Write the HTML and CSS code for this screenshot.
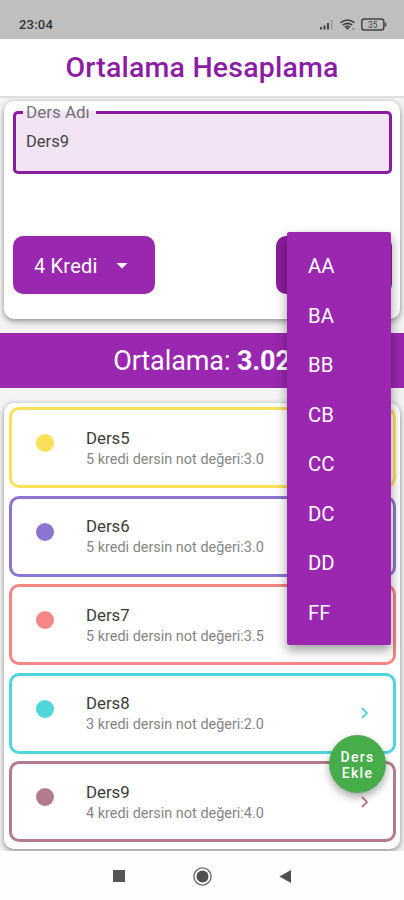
FILE: index.html
```html
<!DOCTYPE html>
<html lang="tr">
<head>
<meta charset="utf-8">
<title>Ortalama Hesaplama</title>
<link rel="stylesheet" href="styles.css">
</head>
<body>
<div class="phone">
  <div class="status">
    <span class="clock">23:04</span>
    <svg class="status-icons" width="70" height="16" viewBox="0 0 70 16">
      <g fill="#444"><rect x="2" y="11" width="2" height="2.500"/><rect x="5.500" y="9.500" width="2" height="4"/><rect x="9" y="7" width="2" height="6.500"/></g>
      <rect x="12.800" y="4" width="1.600" height="9.500" fill="#999"/>
      <g fill="none" stroke="#444" stroke-width="1.600"><path d="M22.500 6.700Q29.500 1.300 36.500 6.700"/><path d="M24.700 9.200Q29.500 5.500 34.300 9.200"/><path d="M26.800 11.300Q29.500 9.400 32.200 11.300"/></g>
      <path d="M27.500 11.700h4L29.500 14z" fill="#444"/><path d="M34 13h3" stroke="#777"/>
      <rect x="43.800" y="3" width="22" height="11" rx="2.500" fill="none" stroke="#444" stroke-width="1.500"/>
      <path d="M67.500 6.500v4" stroke="#444" stroke-width="1.500"/>
      <text x="54.800" y="11.700" text-anchor="middle" class="battery">35</text>
    </svg>
  </div>
  <header class="appbar">Ortalama Hesaplama</header>
  <main class="body">
    <section class="card form">
      <fieldset class="field"><legend>Ders Adı</legend><span>Ders9</span></fieldset>
      <div class="selects">
        <div class="select credit"><span>4 Kredi</span><svg width="12" height="6" viewBox="0 0 12 6"><path d="M.5 0h11L6 5.500z" fill="#fff"/></svg></div>
        <div class="select grade"></div>
      </div>
    </section>
    <div class="banner"><span>Ortalama: <b>3.02</b></span></div>
    <section class="card list">
      <article class="item yellow"><i class="dot"></i><div class="info"><h2>Ders5</h2><p>5 kredi dersin not değeri:3.0</p></div></article>
      <article class="item violet"><i class="dot"></i><div class="info"><h2>Ders6</h2><p>5 kredi dersin not değeri:3.0</p></div></article>
      <article class="item red"><i class="dot"></i><div class="info"><h2>Ders7</h2><p>5 kredi dersin not değeri:3.5</p></div></article>
      <article class="item cyan"><i class="dot"></i><div class="info"><h2>Ders8</h2><p>3 kredi dersin not değeri:2.0</p></div><svg class="chev" width="8" height="12" viewBox="0 0 8 12"><path d="M1 1l5 5-5 5"/></svg></article>
      <article class="item mauve"><i class="dot"></i><div class="info"><h2>Ders9</h2><p>4 kredi dersin not değeri:4.0</p></div><svg class="chev" width="8" height="12" viewBox="0 0 8 12"><path d="M1 1l5 5-5 5"/></svg></article>
    </section>
  </main>
  <nav class="nav">
    <svg width="404" height="49" viewBox="0 0 404 49">
      <rect x="113" y="19" width="12" height="12" fill="#555"/>
      <circle cx="202.500" cy="25.500" r="8.600" fill="none" stroke="#666" stroke-width="1.400"/><circle cx="202.500" cy="25.500" r="6" fill="#505050"/>
      <path d="M279.500 25.500L291 19v13z" fill="#505050"/>
    </svg>
  </nav>
  <div class="menu"><span>AA</span><span>BA</span><span>BB</span><span>CB</span><span>CC</span><span>DC</span><span>DD</span><span>FF</span></div>
  <div class="fab">Ders<br>Ekle</div>
</div>
</body>
</html>
```
FILE: styles.css
```css
* { box-sizing: border-box; }
body { margin: 0; font-family: Roboto, "Liberation Sans", sans-serif; }
.phone { position: relative; width: 404px; height: 900px; overflow: hidden; display: flex; flex-direction: column; background: #fdfdfd; }
.status { height: 39px; flex: none; background: #bfbfbf; display: flex; justify-content: space-between; align-items: flex-start; padding: 16px 16px 0 19px; }
.clock { font-size: 13px; line-height: 18px; font-weight: 500; color: #333; letter-spacing: .2px; }
.status-icons { display: block; }
.battery { font-size: 8.5px; fill: #444; }
.appbar { height: 57px; flex: none; background: #fff; display: flex; justify-content: center; align-items: center; font-size: 28.5px; font-weight: 500; color: #8c1ba5; letter-spacing: .2px; }
.body { height: 755px; flex: none; overflow: hidden; background: #f5f4f4; border-top: 2px solid #dfdfdf; padding: 3px 4px 0; }
.card { background: #fff; border-radius: 10px; box-shadow: 0 3px 6px rgba(0,0,0,.32), 0 0 5px rgba(0,0,0,.14); }
.form { height: 218px; padding: 2px 8px 0 9px; display: flex; flex-direction: column; }
.field { height: 71px; flex: none; margin: 0; min-width: 0; border: 3px solid #8a1aa0; border-radius: 5px; background: #f2e4f5; padding: 0 10px; color: #444; font-size: 16.5px; line-height: 20px; }
.field legend { font-size: 17px; line-height: 18px; padding: 0 6px 0 3px; margin-left: -3px; color: #737077; }
.field span { display: block; margin-top: 11px; }
.selects { display: flex; justify-content: space-between; margin-top: 62px; }
.select { height: 58px; border-radius: 10px; background: #9927b0; color: #fff; display: flex; align-items: center; font-size: 20px; }
.credit { width: 142px; padding: 2px 0 0 21px; gap: 18px; letter-spacing: .2px; }
.grade { width: 116px; background: #8c1ca0; }
.banner { height: 55px; margin: 14px -4px 15px; background: #9a27b0; color: #fff; display: flex; align-items: center; justify-content: center; font-size: 27px; letter-spacing: -.1px; padding-top: 1px; }
.list { height: 446px; padding: 4px 4px 0 5px; display: flex; flex-direction: column; gap: 7.6px; }
.item { height: 81px; flex: none; border: 3px solid currentColor; border-radius: 10px; display: flex; align-items: center; padding: 0 24px; }
.dot { width: 18px; height: 18px; border-radius: 50%; background: currentColor; margin: -9px 32px 0 0; }
.info { flex: 1; padding-top: 2px; }
.info h2 { margin: 0; font-size: 16.8px; line-height: 21px; font-weight: 400; color: #3b3b3b; }
.info p { margin: 0; font-size: 14.45px; line-height: 21px; color: #858585; white-space: nowrap; }
.chev { fill: none; stroke: currentColor; stroke-width: 1.8; }
.yellow { color: #f8e159; }
.violet { color: #8c75d2; }
.red { color: #f48683; }
.cyan { color: #4fd6dc; }
.mauve { color: #b37b8c; }
.nav { flex: 1; }
.nav svg { display: block; }
.menu { position: absolute; left: 287px; top: 232px; width: 104px; height: 413px; padding: 9px 0 0 21px; background: #9b27b1; border-radius: 2px; box-shadow: 0 5px 12px rgba(0,0,0,.4); display: flex; flex-direction: column; color: #fff; font-size: 20.3px; }
.menu span { height: 49.5px; line-height: 50px; flex: none; }
.fab { position: absolute; left: 329px; top: 735px; width: 57px; height: 58px; border-radius: 50%; background: #47ad4b; color: #fff; font-size: 14px; font-weight: 500; line-height: 16px; letter-spacing: 1.3px; text-align: center; padding-top: 14px; box-shadow: 0 4px 8px rgba(0,0,0,.35); }
```
